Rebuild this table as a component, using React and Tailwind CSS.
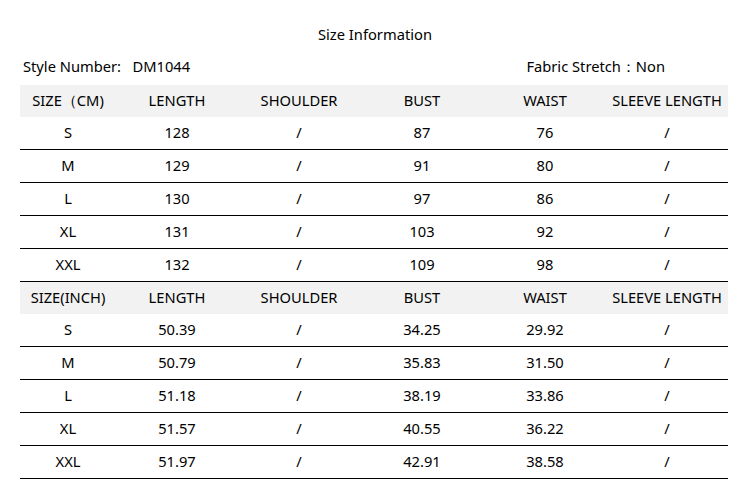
import React from 'react';

const cols = ['w-[96px]', 'w-[122px]', 'w-[122px]', 'w-[124px]', 'w-[122px]', 'w-[122px]'];

const cmRows = [
  ['S', '128', '/', '87', '76', '/'],
  ['M', '129', '/', '91', '80', '/'],
  ['L', '130', '/', '97', '86', '/'],
  ['XL', '131', '/', '103', '92', '/'],
  ['XXL', '132', '/', '109', '98', '/'],
];

const inchRows = [
  ['S', '50.39', '/', '34.25', '29.92', '/'],
  ['M', '50.79', '/', '35.83', '31.50', '/'],
  ['L', '51.18', '/', '38.19', '33.86', '/'],
  ['XL', '51.57', '/', '40.55', '36.22', '/'],
  ['XXL', '51.97', '/', '42.91', '38.58', '/'],
];

const HeaderRow = ({ first }) => {
  const labels = [first, 'LENGTH', 'SHOULDER', 'BUST', 'WAIST', 'SLEEVE LENGTH'];
  return (
    <div className="flex h-[32px] items-center pb-[2px] bg-[#f2f2f2]">
      {labels.map((l, i) => (
        <div key={i} className={`${cols[i]} text-center whitespace-nowrap`}>
          {l}
        </div>
      ))}
    </div>
  );
};

const DataRow = ({ cells }) => (
  <div className="flex h-[33px] items-center pb-[2px] border-b border-black">
    {cells.map((c, i) => (
      <div key={i} className={`${cols[i]} text-center`}>
        {c}
      </div>
    ))}
  </div>
);

export default function App() {
  return (
    <div
      className="w-[750px] h-[500px] bg-white text-black text-[14.7px] leading-[20px]"
      style={{ fontFamily: '"Noto Sans", "Open Sans", sans-serif' }}
    >
      <div className="pt-[24px] text-center">Size Information</div>

      <div className="mt-[12px] flex justify-between pl-[23px] pr-[85px]">
        <span className="whitespace-pre">Style Number:   DM1044</span>
        <span className="whitespace-pre">Fabric Stretch：Non</span>
      </div>

      <div className="mx-[20px] mt-[9px] w-[708px]">
        <HeaderRow first="SIZE（CM)" />
        {cmRows.map((r, i) => (
          <DataRow key={i} cells={r} />
        ))}
        <HeaderRow first="SIZE(INCH)" />
        {inchRows.map((r, i) => (
          <DataRow key={i} cells={r} />
        ))}
      </div>
    </div>
  );
}
